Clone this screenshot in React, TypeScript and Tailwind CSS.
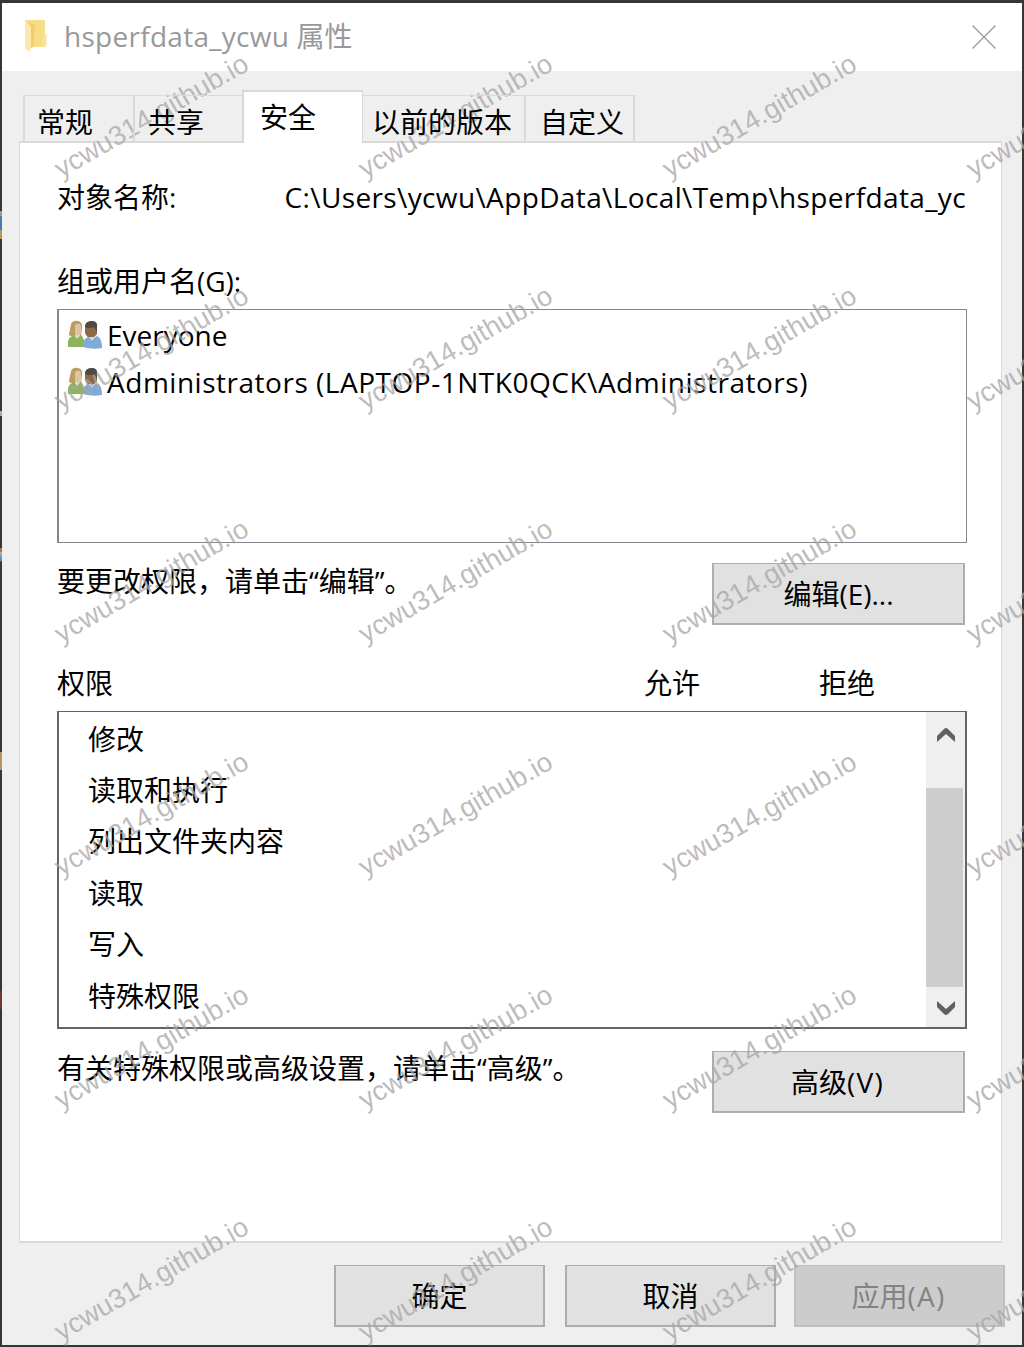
import React from "react";

const permissions = ["修改", "读取和执行", "列出文件夹内容", "读取", "写入", "特殊权限"];

function FolderIcon() {
  return (
    <svg width="24" height="34" viewBox="0 0 24 34" className="shrink-0">
      <rect x="1" y="0" width="20" height="27" rx="1" fill="#f7dd85" />
      <path d="M19 14h3.500v12.500H17z" fill="#fae29a" />
      <path d="M1 1l6 3v24l-1 4-5-3z" fill="#fce9a9" />
      <path d="M3 2l8 3-2 22-2 1V7z" fill="#f0cd6b" />
    </svg>
  );
}

function UsersIcon() {
  return (
    <svg width="36" height="30" viewBox="0 0 36 30" className="shrink-0">
      <path d="M4 4q2-4 7-3q5 1 4 7l-1 8H4q-2 0-2-2z" fill="#b8a061" />
      <path d="M8 5q5-3 6 1v8q-2 3-6 1z" fill="#dfc3a3" />
      <path d="M1 27v-6q1-4 6-6l3 3 4-3q3 2 4 12z" fill="#8fb35c" />
      <path d="M8 15l2 4 3-4z" fill="#d8e3c4" />
      <path d="M18 7q0-6 7-6q6 0 5 7v6q-3 4-6 4-4 0-6-5z" fill="#8f6844" />
      <path d="M18 7q0-6 7-6q6 0 5 7v4l-3-5q-4 2-9 0z" fill="#4e4a44" />
      <path d="M16 27q-1-8 5-10l4 2 5-3q5 2 5 12-10 2-19-1z" fill="#7fabd9" />
      <path d="M22 17l3 4 3-4z" fill="#c9dcef" />
    </svg>
  );
}

function Tab({ label, className }: { label: string; className: string }) {
  return <div className={`flex items-center border-[#d9d9d9] whitespace-nowrap ${className}`}>{label}</div>;
}

function PushButton({ children, className }: { children: React.ReactNode; className?: string }) {
  return (
    <button className={`flex h-[62px] shrink-0 items-center justify-center border-2 border-t whitespace-nowrap ${className ?? ""}`}>
      {children}
    </button>
  );
}

function Watermarks() {
  return (
    <div className="pointer-events-none absolute inset-0 overflow-hidden">
      <div className="-mt-px -ml-px grid w-[1216px] auto-rows-[232.75px] grid-cols-[repeat(4,304px)]">
        {Array.from({ length: 24 }, (_, i) => (
          <div key={i} className="flex items-center justify-center">
            <span className="-rotate-30 font-['Liberation_Sans',sans-serif] text-[27.300px] leading-none whitespace-nowrap text-[#a6a6a6]/75">
              ycwu314.github.io
            </span>
          </div>
        ))}
      </div>
    </div>
  );
}

export default function App() {
  return (
    <div className="relative h-[1347px] w-[1024px] overflow-hidden bg-[#363636] bg-[linear-gradient(#363636_211px,#b5955f_211px,#b5955f_216px,#477cad_216px,#477cad_230px,#b5955f_230px,#b5955f_239px,#363636_239px,#363636_411px,#aaa_411px,#aaa_416px,#363636_416px,#363636_548px,#b57543_548px,#b57543_552px,#adb7a0_552px,#5582b5_561px,#363636_562px,#363636_752px,#b5955f_752px,#b5955f_770px,#363636_770px,#363636_991px,#703838_991px,#703838_1009px,#363636_1009px)] bg-[size:2px_100%] bg-no-repeat px-[2px] pt-[3px] pb-[2px] font-['Open_Sans','Noto_Sans_CJK_SC',sans-serif] text-[28px] leading-[40px] text-black">
      <div className="h-[1342px] bg-[#efefef]">
        <header className="flex h-[68px] items-center bg-white pl-[22px] text-[#999]">
          <FolderIcon />
          <h1 className="-mt-[2px] ml-4 whitespace-nowrap">
            <span className="tracking-[0.28px]">hsperfdata_ycwu</span> 属性
          </h1>
          <svg width="24" height="24" viewBox="0 0 24 24" className="mr-[26px] ml-auto" stroke="#999" strokeWidth="1.3">
            <path d="M.5.5l23 23M23.500.5l-23 23" />
          </svg>
        </header>

        <nav className="relative z-10 mt-[19px] -mb-[2px] ml-[21px] flex h-[53px] items-end">
          <Tab label="常规" className="h-[48px] w-[110px] border-t border-l-2 pt-[4px] pl-[12px]" />
          <Tab label="共享" className="h-[48px] w-[109px] border-t border-l-2 pt-[4px] pl-[13px]" />
          <Tab label="安全" className="h-[53px] w-[121px] border-t-2 border-r border-l-2 bg-white pb-[2px] pl-[16px]" />
          <Tab label="以前的版本" className="h-[48px] w-[161px] border-t pt-[4px] pl-[9px]" />
          <Tab label="自定义" className="h-[48px] w-[111px] border-x-2 border-t pt-[4px] pl-[14px]" />
        </nav>

        <main className="ml-[17px] flex h-[1102px] w-[983px] flex-col border border-y-2 border-[#d9d9d9] bg-white px-[37px] pt-[34px]">
          <div className="flex h-[40px] justify-between whitespace-nowrap">
            <span>对象名称:</span>
            <span className="mr-[-2px] tracking-[0.37px]">C:\Users\ycwu\AppData\Local\Temp\hsperfdata_yc</span>
          </div>
          <div className="mt-[44px] h-[48px]">组或用户名(G):</div>
          <div className="h-[234px] w-[910px] border border-l-2 border-[#828790] pt-[1px] pl-[8px]">
            {[
              ["Everyone", "tracking-normal"],
              ["Administrators (LAPTOP-1NTK0QCK\\Administrators)", "tracking-[0.52px]"],
            ].map(([name, tracking]) => (
              <div key={name} className="flex h-[47px] items-center gap-[4px] whitespace-nowrap">
                <UsersIcon />
                <span className={tracking}>{name}</span>
              </div>
            ))}
          </div>
          <div className="mt-[20px] flex h-[62px] w-[908px] justify-between">
            <span className="-mt-[2px] whitespace-nowrap">要更改权限，请单击“编辑”。</span>
            <PushButton className="w-[253px] border-[#adadad] bg-[#e1e1e1]">编辑(E)...</PushButton>
          </div>
          <div className="mt-[38px] flex h-[48px]">
            <span className="w-[587px]">权限</span>
            <span className="w-[175px]">允许</span>
            <span>拒绝</span>
          </div>
          <div className="flex h-[318px] w-[910px] justify-between border-2 border-t border-[#646464]">
            <ul className="pt-[1px] pl-[29px]">
              {permissions.map((p) => (
                <li key={p} className="flex h-[51.400px] items-center">{p}</li>
              ))}
            </ul>
            <div className="flex w-[39px] flex-col bg-[#efefef]">
              <div className="flex h-[76px] justify-center pt-[16px]">
                <svg width="18" height="14" viewBox="0 0 18 14"><path d="M0 14V8l7-7q2-2 4 0l7 7v6L9 6z" fill="#606060" /></svg>
              </div>
              <div className="h-[199px] w-[37px] bg-[#cdcdcd]" />
              <div className="flex flex-1 justify-center pt-[14px]">
                <svg width="18" height="14" viewBox="0 0 18 14"><path d="M0 0v6l7 7q2 2 4 0l7-7V0L9 8z" fill="#606060" /></svg>
              </div>
            </div>
          </div>
          <div className="mt-[22px] flex h-[62px] w-[908px] justify-between">
            <span className="-mt-[3px] whitespace-nowrap">有关特殊权限或高级设置，请单击“高级”。</span>
            <PushButton className="w-[253px] border-[#adadad] bg-[#e1e1e1]"><span className="-ml-[2px]">高级<span className="tracking-[1.300px]">(V)</span></span></PushButton>
          </div>
        </main>

        <footer className="mt-[22px] ml-[332px] flex">
          <PushButton className="mr-[20px] w-[211px] border-[#adadad] bg-[#e1e1e1]">确定</PushButton>
          <PushButton className="mr-[18px] w-[211px] border-[#adadad] bg-[#e1e1e1]">取消</PushButton>
          <PushButton className="w-[211px] border-[#bfbfbf] bg-[#ccc] text-[#838383]"><span className="-ml-[2px]">应用<span className="tracking-[1.300px]">(A)</span></span></PushButton>
        </footer>
      </div>
      <Watermarks />
    </div>
  );
}
